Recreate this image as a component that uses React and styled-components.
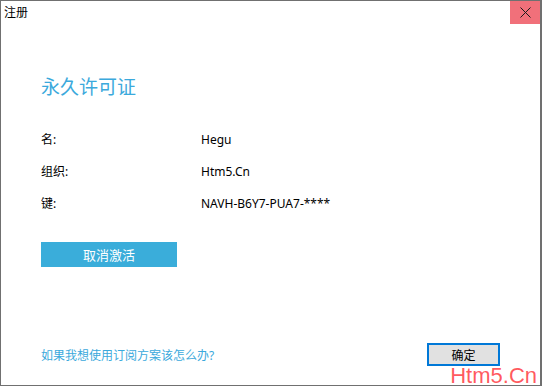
import React from 'react';
import styled, { createGlobalStyle } from 'styled-components';

const Global = createGlobalStyle`
  html, body { margin: 0; padding: 0; background: #fff; }
  body { font-family: "Noto Sans", "Noto Sans CJK SC", sans-serif; }
`;

const Window = styled.div`
  position: relative;
  box-sizing: border-box;
  width: 542px;
  height: 386px;
  border: 1px solid #707070;
  border-right-width: 2px;
  background: #fff;
  display: flex;
  flex-direction: column;
`;

const TitleBar = styled.div`
  height: 23px;
  display: flex;
  align-items: center;
  justify-content: space-between;
`;

const Title = styled.span`
  padding-left: 3px;
  font-size: 12px;
  color: #000;
  line-height: 23px;
`;

const CloseButton = styled.div`
  width: 30px;
  height: 23px;
  background: #f1707a;
  display: flex;
  align-items: center;
  justify-content: center;
`;

const Body = styled.div`
  flex: 1;
  padding: 0 40px;
  display: flex;
  flex-direction: column;
`;

const Heading = styled.h1`
  margin: 49px 0 0;
  font-size: 19px;
  font-weight: normal;
  line-height: 28px;
  color: #3ba9dc;
`;

const InfoList = styled.div`
  margin-top: 22px;
  display: grid;
  grid-template-columns: 160px 1fr;
  grid-auto-rows: 32px;
  align-items: center;
  font-size: 12px;
  color: #000;
`;

const PrimaryButton = styled.button`
  margin-top: 23px;
  width: 136px;
  height: 25px;
  border: none;
  background: #3aadda;
  color: #fff;
  font-family: inherit;
  font-size: 13px;
  padding: 0;
`;

const Footer = styled.div`
  margin-top: auto;
  padding-bottom: 19px;
  display: flex;
  align-items: center;
  justify-content: space-between;
`;

const HelpLink = styled.a`
  font-size: 12px;
  color: #3ba9dc;
  text-decoration: none;
`;

const OkButton = styled.button`
  box-sizing: border-box;
  width: 73px;
  height: 23px;
  border: 2px solid #0078d7;
  background: #e1e1e1;
  color: #000;
  font-family: inherit;
  font-size: 12px;
  padding: 0;
`;

const Watermark = styled.span`
  position: absolute;
  right: 3px;
  bottom: -2px;
  font-family: "Liberation Sans", Arial, sans-serif;
  font-size: 22px;
  line-height: 22px;
  color: rgba(255, 60, 66, 0.85);
`;

const CloseIcon = () => (
  <svg width="11" height="11" viewBox="0 0 11 11">
    <path d="M0.5 0.5L10.5 10.5M10.5 0.5L0.5 10.5" stroke="#1a1a1a" strokeWidth="1" fill="none" />
  </svg>
);

const info = [
  ['名:', 'Hegu'],
  ['组织:', 'Htm5.Cn'],
  ['键:', 'NAVH-B6Y7-PUA7-****'],
];

export default function App() {
  return (
    <>
      <Global />
      <Window>
        <TitleBar>
          <Title>注册</Title>
          <CloseButton><CloseIcon /></CloseButton>
        </TitleBar>
        <Body>
          <Heading>永久许可证</Heading>
          <InfoList>
            {info.map(([k, v]) => (
              <React.Fragment key={k}>
                <span>{k}</span>
                <span>{v}</span>
              </React.Fragment>
            ))}
          </InfoList>
          <PrimaryButton>取消激活</PrimaryButton>
          <Footer>
            <HelpLink href="#">如果我想使用订阅方案该怎么办?</HelpLink>
            <OkButton>确定</OkButton>
          </Footer>
        </Body>
        <Watermark>Htm5.Cn</Watermark>
      </Window>
    </>
  );
}
